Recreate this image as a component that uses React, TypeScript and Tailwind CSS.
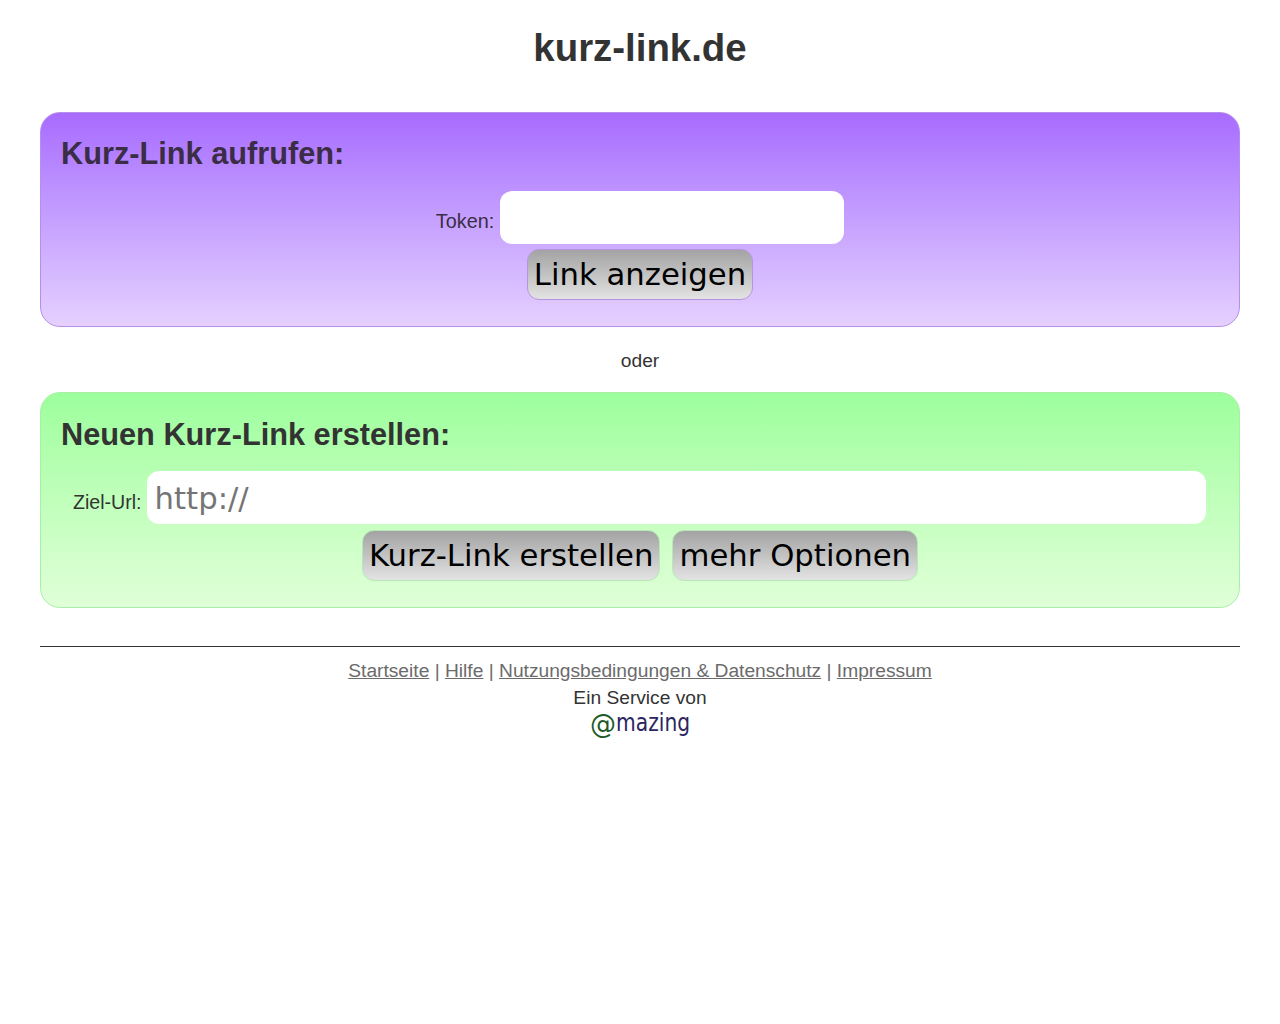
import React from 'react';

const inputClass =
  "h-[53px] rounded-[12px] border border-white/30 bg-white px-[7px] font-['DejaVu_Sans',sans-serif] text-[30.72px] text-black outline-none placeholder:text-[#757575]";
const buttonClass =
  "h-[51px] rounded-[12px] border bg-gradient-to-b from-[#a3a3a3] to-[#e3e3e3] px-[6px] pb-[2px] font-['DejaVu_Sans',sans-serif] text-[30.72px] leading-[38px] text-black";

export default function App() {
  return (
    <div className="min-h-[1024px] bg-white px-10 font-['Liberation_Sans',Arial,sans-serif] text-[19.2px] text-[#333]">
      <h1 className="pt-[26px] pb-[42px] text-center text-[38.4px] font-bold leading-[44px]">kurz-link.de</h1>

      {/* Link aufrufen */}
      <section className="h-[215px] rounded-[20px] border border-[#b78fe8] bg-gradient-to-b from-[#a86bff] to-[#e5d0ff] px-5 pt-[21px] text-[#3a2d45]">
        <h2 className="text-[30.72px] font-bold leading-[40px]">Kurz-Link aufrufen:</h2>
        <div className="mt-[17px] flex items-end justify-center">
          <label className="mr-[6px] mb-[12px] text-[19.8px] leading-[22px]">Token:</label>
          <input type="text" className={`${inputClass} w-[344px]`} />
        </div>
        <div className="mt-[5px] flex justify-center">
          <button className={`${buttonClass} border-[#b496e0]`}>Link anzeigen</button>
        </div>
      </section>

      <p className="pt-[23px] pb-[20px] text-center leading-[22px]">oder</p>

      {/* Link erstellen */}
      <section className="h-[216px] rounded-[20px] border border-[#a8f0a8] bg-gradient-to-b from-[#9cff9c] to-[#e0ffd8] px-5 pt-[22px]">
        <h2 className="text-[30.72px] font-bold leading-[40px]">Neuen Kurz-Link erstellen:</h2>
        <div className="mt-[16px] flex items-end">
          <label className="ml-[12px] mr-[5px] mb-[11px] text-[19.6px] leading-[22px]">Ziel-Url:</label>
          <input type="text" placeholder="http://" className={`${inputClass} h-[52px] w-[1059px]`} />
        </div>
        <div className="mt-[6px] flex justify-center gap-3">
          <button className={`${buttonClass} h-[50px] border-[#b5e8b5]`}>Kurz-Link erstellen</button>
          <button className={`${buttonClass} h-[50px] border-[#b5e8b5]`}>mehr Optionen</button>
        </div>
      </section>

      <footer className="mt-[38px] border-t border-[#333] pt-[13px] text-center">
        <div className="leading-[22px] text-[#6b6b6b]">
          <a href="#" className="underline">Startseite</a> | <a href="#" className="underline">Hilfe</a> |{' '}
          <a href="#" className="underline">Nutzungsbedingungen &amp; Datenschutz</a> |{' '}
          <a href="#" className="underline">Impressum</a>
        </div>
        <div className="mt-[5px] leading-[22px]">Ein Service von</div>
        <div className="flex h-[30px] items-center justify-center">
          <span className="w-[26px] font-['DejaVu_Sans',sans-serif] text-[26px] leading-[30px] text-[#1f5a2a]">@</span>
          <span className="-mt-[3px] inline-block w-[74px] origin-left scale-x-[0.81] text-left font-['DejaVu_Sans',sans-serif] text-[25px] leading-[30px] whitespace-nowrap text-[#2a2560]">mazing</span>
        </div>
      </footer>
    </div>
  );
}
